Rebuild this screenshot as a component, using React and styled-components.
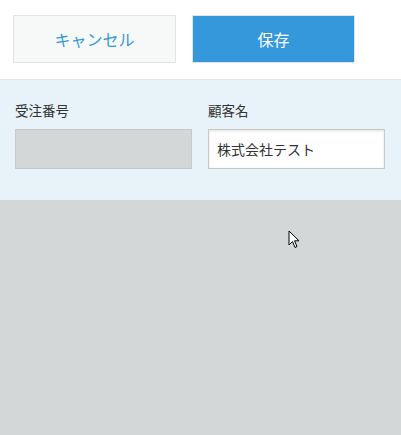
import React from "react";
import styled, { createGlobalStyle } from "styled-components";

const GlobalStyle = createGlobalStyle`
	html, body {
		margin: 0;
		padding: 0;
		background: #d4d7d8;
	}
	body {
		font-family: "Noto Sans CJK JP", "Noto Sans", sans-serif;
	}
`;

const Page = styled.div`
	position: relative;
	width: 401px;
	height: 435px;
	background: #d4d7d8;
	overflow: hidden;
`;

const Toolbar = styled.div`
	display: flex;
	gap: 16px;
	padding: 15px 13px 16px;
	background: #ffffff;
	border-bottom: 1px solid #e3e3e3;
`;

const Button = styled.button`
	width: 163px;
	height: 48px;
	box-sizing: border-box;
	border: 1px solid #e3e3e3;
	background: ${(props) => (props.primary ? "#3498db" : "#f7f9f9")};
	color: ${(props) => (props.primary ? "#ffffff" : "#3498db")};
	font-family: inherit;
	font-size: 16px;
	outline: none;
	padding: 0;
`;

const Form = styled.div`
	display: flex;
	gap: 16px;
	padding: 15px 15px 31px;
	background: #e8f2f9;
`;

const Field = styled.div`
	display: flex;
	flex-direction: column;
	width: 177px;
`;

const Label = styled.div`
	font-size: 13.5px;
	line-height: 30px;
	color: #333333;
	margin-bottom: 4px;
`;

const Input = styled.div`
	height: 40px;
	box-sizing: border-box;
	border: 1px solid #c9c9c9;
	background: ${(props) => (props.disabled ? "#d4d7d8" : "#ffffff")};
	box-shadow: ${(props) =>
		props.disabled ? "none" : "inset 0 1px 3px rgba(0, 0, 0, 0.12)"};
	padding: 0 9px 0 8px;
	display: flex;
	align-items: center;
	font-size: 14px;
	color: #333333;
`;

const Cursor = styled.svg`
	position: absolute;
	left: 288px;
	top: 230px;
`;

const App = () => {
	return (
		<Page>
			<GlobalStyle />
			<Toolbar>
				<Button>キャンセル</Button>
				<Button primary>保存</Button>
			</Toolbar>
			<Form>
				<Field>
					<Label>受注番号</Label>
					<Input disabled />
				</Field>
				<Field>
					<Label>顧客名</Label>
					<Input>株式会社テスト</Input>
				</Field>
			</Form>
			<Cursor width="14" height="20" viewBox="0 0 14 20">
				<path
					d="M1 1 L1 15 L4.5 11.5 L7 17.5 L9 16.5 L6.5 10.8 L11 10.8 Z"
					fill="#ffffff"
					stroke="#000000"
					strokeWidth="1"
					strokeLinejoin="round"
				/>
			</Cursor>
		</Page>
	);
};

export default App;
